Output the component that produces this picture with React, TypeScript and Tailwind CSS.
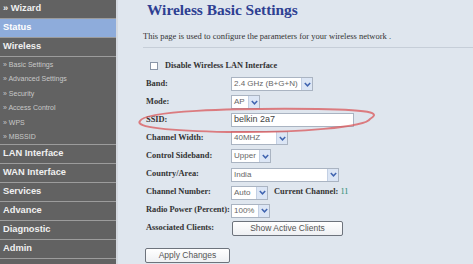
import React from "react";

const Arrow = () => (
  <div className="flex w-[11px] shrink-0 items-center justify-center border-l border-[#c3d0e4] bg-[#dce6f5]">
    <svg width="7" height="5" viewBox="0 0 7 5">
      <path d="M0.8 1 L3.5 3.8 L6.2 1" fill="none" stroke="#4064b0" strokeWidth="1.5" />
    </svg>
  </div>
);

const Sel = ({ text, w }: { text: string; w: string }) => (
  <div className={`flex h-[14px] items-stretch justify-between border border-[#aab4c2] bg-white ${w}`}>
    <span className="whitespace-nowrap pl-[2px] text-[8px] leading-[12px] text-[#666] font-['Liberation_Sans',sans-serif]">
      {text}
    </span>
    <Arrow />
  </div>
);

const Row = ({ label, children }: { label: string; children: React.ReactNode }) => (
  <div className="flex h-[18.1px] items-center">
    <div className="w-[86px] whitespace-nowrap pl-[1px] text-[8.4px] font-bold text-[#333] font-['Liberation_Serif',serif]">
      {label}
    </div>
    {children}
  </div>
);

const MainItem = ({ label, active }: { label: string; active?: boolean }) => (
  <div
    className={`flex h-[19px] items-center border-b border-[#9c9c9c] pl-[3px] text-[9.3px] font-bold font-['Liberation_Sans',sans-serif] ${
      active ? "bg-[#8eacdb] text-white" : "text-[#f0f0f0]"
    }`}
  >
    {label}
  </div>
);

const SubItem = ({ label }: { label: string }) => (
  <div className="flex h-[14.4px] items-center whitespace-nowrap pl-[3px] text-[7px] text-[#c8c8c8] font-['Liberation_Sans',sans-serif]">
    » {label}
  </div>
);

export default function App() {
  return (
    <div className="flex h-[264px] w-[473px] overflow-hidden bg-[#dfe6ee]">
      <div className="flex w-[118px] shrink-0">
        <div className="w-[116px] bg-[#626262]">
          <MainItem label="» Wizard" />
          <MainItem label="Status" active />
          <MainItem label="Wireless" />
          <div className="border-b border-[#9c9c9c] pt-[1px]">
            <SubItem label="Basic Settings" />
            <SubItem label="Advanced Settings" />
            <SubItem label="Security" />
            <SubItem label="Access Control" />
            <SubItem label="WPS" />
            <SubItem label="MBSSID" />
          </div>
          <MainItem label="LAN Interface" />
          <MainItem label="WAN Interface" />
          <MainItem label="Services" />
          <MainItem label="Advance" />
          <MainItem label="Diagnostic" />
          <MainItem label="Admin" />
        </div>
        <div className="w-[2px] bg-[#d4d9e0]" />
      </div>

      <div className="relative flex-1 pl-[25px]">
        <div className="mt-[1px] pl-[4px] text-[15.4px] leading-[18px] font-bold text-[#2e3f92] font-['Liberation_Serif',serif]">
          Wireless Basic Settings
        </div>
        <div className="mt-[12px] whitespace-nowrap text-[8.5px] leading-[10px] text-[#333] font-['Liberation_Serif',serif]">
          This page is used to configure the parameters for your wireless network .
        </div>
        <div className="mt-[6px] h-[1px] bg-[#c6ced8]" />

        <div className="mt-[9px] pl-[2px]">
          <div className="flex h-[18px] items-center">
            <div className="ml-[5px] h-[8px] w-[8px] border border-[#8a96a8] bg-white" />
            <span className="ml-[7px] text-[8.3px] font-bold text-[#333] font-['Liberation_Serif',serif]">
              Disable Wireless LAN Interface
            </span>
          </div>
          <Row label="Band:">
            <Sel text="2.4 GHz (B+G+N)" w="w-[82px]" />
          </Row>
          <Row label="Mode:">
            <Sel text="AP" w="w-[29px]" />
          </Row>
          <Row label="SSID:">
            <div className="flex h-[14px] w-[123px] items-center border border-[#aab4c2] bg-white pl-[2px] text-[9px] text-[#444] font-['Liberation_Sans',sans-serif]">
              belkin 2a7
            </div>
          </Row>
          <Row label="Channel Width:">
            <Sel text="40MHZ" w="w-[57px]" />
          </Row>
          <Row label="Control Sideband:">
            <Sel text="Upper" w="w-[40px]" />
          </Row>
          <Row label="Country/Area:">
            <Sel text="India" w="w-[108px]" />
          </Row>
          <Row label="Channel Number:">
            <Sel text="Auto" w="w-[37px]" />
            <span className="ml-[6px] text-[8.4px] font-bold text-[#333] font-['Liberation_Serif',serif]">
              Current Channel: <span className="font-normal text-[#1f8a6e]">11</span>
            </span>
          </Row>
          <Row label="Radio Power (Percent):">
            <Sel text="100%" w="w-[39px]" />
          </Row>
          <Row label="Associated Clients:">
            <button className="ml-[1px] flex h-[15px] w-[111px] items-center justify-center rounded-[2px] border border-[#6d737c] bg-gradient-to-b from-white to-[#eef0f3] text-[8.5px] text-[#555] font-['Liberation_Sans',sans-serif]">
              Show Active Clients
            </button>
          </Row>
          <div className="mt-[10px] flex">
            <button className="flex h-[15px] w-[85px] items-center justify-center rounded-[2px] border border-[#6d737c] bg-gradient-to-b from-white to-[#eef0f3] text-[8.5px] text-[#555] font-['Liberation_Sans',sans-serif]">
              Apply Changes
            </button>
          </div>
        </div>

        <svg className="pointer-events-none absolute left-0 top-0" width="355" height="264">
          <path
            d="M22 121 C 26 111, 110 108, 200 109 C 262 110, 260 114, 252 119 C 248 127, 180 133, 110 132 C 50 131, 16 127, 22 121 Z"
            fill="none"
            stroke="#d9575a"
            strokeOpacity="0.75"
            strokeWidth="2"
          />
        </svg>
      </div>
    </div>
  );
}
